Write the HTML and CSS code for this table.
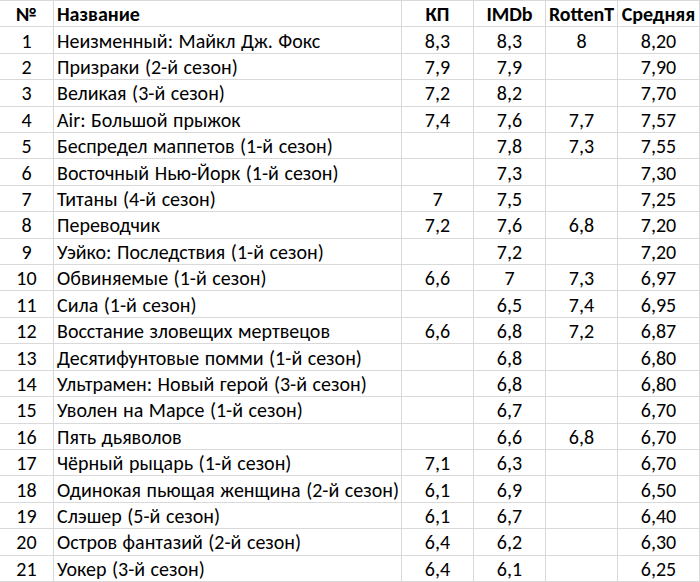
FILE: index.html
```html
<!DOCTYPE html>
<html lang="ru">
<head>
<meta charset="utf-8">
<link rel="stylesheet" href="styles.css">
</head>
<body>
<div class="sheet">
  <div class="c n h">№</div><div class="c t h">Название</div><div class="c v h">КП</div><div class="c v h">IMDb</div><div class="c v h">RottenT</div><div class="c a h">Средняя</div>
  <div class="c n">1</div><div class="c t">Неизменный: Майкл Дж. Фокс</div><div class="c v">8,3</div><div class="c v">8,3</div><div class="c v">8</div><div class="c a">8,20</div>
  <div class="c n">2</div><div class="c t">Призраки (2-й сезон)</div><div class="c v">7,9</div><div class="c v">7,9</div><div class="c v"></div><div class="c a">7,90</div>
  <div class="c n">3</div><div class="c t">Великая (3-й сезон)</div><div class="c v">7,2</div><div class="c v">8,2</div><div class="c v"></div><div class="c a">7,70</div>
  <div class="c n">4</div><div class="c t">Air: Большой прыжок</div><div class="c v">7,4</div><div class="c v">7,6</div><div class="c v">7,7</div><div class="c a">7,57</div>
  <div class="c n">5</div><div class="c t">Беспредел маппетов (1-й сезон)</div><div class="c v"></div><div class="c v">7,8</div><div class="c v">7,3</div><div class="c a">7,55</div>
  <div class="c n">6</div><div class="c t">Восточный Нью-Йорк (1-й сезон)</div><div class="c v"></div><div class="c v">7,3</div><div class="c v"></div><div class="c a">7,30</div>
  <div class="c n">7</div><div class="c t">Титаны (4-й сезон)</div><div class="c v">7</div><div class="c v">7,5</div><div class="c v"></div><div class="c a">7,25</div>
  <div class="c n">8</div><div class="c t">Переводчик</div><div class="c v">7,2</div><div class="c v">7,6</div><div class="c v">6,8</div><div class="c a">7,20</div>
  <div class="c n">9</div><div class="c t">Уэйко: Последствия (1-й сезон)</div><div class="c v"></div><div class="c v">7,2</div><div class="c v"></div><div class="c a">7,20</div>
  <div class="c n">10</div><div class="c t">Обвиняемые (1-й сезон)</div><div class="c v">6,6</div><div class="c v">7</div><div class="c v">7,3</div><div class="c a">6,97</div>
  <div class="c n">11</div><div class="c t">Сила (1-й сезон)</div><div class="c v"></div><div class="c v">6,5</div><div class="c v">7,4</div><div class="c a">6,95</div>
  <div class="c n">12</div><div class="c t">Восстание зловещих мертвецов</div><div class="c v">6,6</div><div class="c v">6,8</div><div class="c v">7,2</div><div class="c a">6,87</div>
  <div class="c n">13</div><div class="c t">Десятифунтовые помми (1-й сезон)</div><div class="c v"></div><div class="c v">6,8</div><div class="c v"></div><div class="c a">6,80</div>
  <div class="c n">14</div><div class="c t">Ультрамен: Новый герой (3-й сезон)</div><div class="c v"></div><div class="c v">6,8</div><div class="c v"></div><div class="c a">6,80</div>
  <div class="c n">15</div><div class="c t">Уволен на Марсе (1-й сезон)</div><div class="c v"></div><div class="c v">6,7</div><div class="c v"></div><div class="c a">6,70</div>
  <div class="c n">16</div><div class="c t">Пять дьяволов</div><div class="c v"></div><div class="c v">6,6</div><div class="c v">6,8</div><div class="c a">6,70</div>
  <div class="c n">17</div><div class="c t">Чёрный рыцарь (1-й сезон)</div><div class="c v">7,1</div><div class="c v">6,3</div><div class="c v"></div><div class="c a">6,70</div>
  <div class="c n">18</div><div class="c t">Одинокая пьющая женщина (2-й сезон)</div><div class="c v">6,1</div><div class="c v">6,9</div><div class="c v"></div><div class="c a">6,50</div>
  <div class="c n">19</div><div class="c t">Слэшер (5-й сезон)</div><div class="c v">6,1</div><div class="c v">6,7</div><div class="c v"></div><div class="c a">6,40</div>
  <div class="c n">20</div><div class="c t">Остров фантазий (2-й сезон)</div><div class="c v">6,4</div><div class="c v">6,2</div><div class="c v"></div><div class="c a">6,30</div>
  <div class="c n">21</div><div class="c t">Уокер (3-й сезон)</div><div class="c v">6,4</div><div class="c v">6,1</div><div class="c v"></div><div class="c a">6,25</div>
</div>
</body>
</html>
```
FILE: styles.css
```css
html, body {
  margin: 0;
  padding: 0;
  background: #fff;
}
.sheet {
  display: grid;
  grid-template-columns: 54px 348px 72px 72px 72px 82px;
  grid-template-rows: repeat(22, 1fr);
  width: 700px;
  height: 582px;
  border-top: 1px solid #d9d9d9;
  box-sizing: border-box;
  overflow: hidden;
  font-family: Carlito, Calibri, "Open Sans", sans-serif;
  font-size: 20px;
  word-spacing: 1px;
  color: #000;
}
.c {
  display: flex;
  align-items: center;
  border-right: 1px solid #d9d9d9;
  border-bottom: 1px solid #d9d9d9;
  white-space: nowrap;
  overflow: hidden;
  padding-top: 1px;
}
.n, .v, .a {
  justify-content: center;
}
.t {
  padding-left: 3px;
}
.h {
  font-weight: bold;
}
```
